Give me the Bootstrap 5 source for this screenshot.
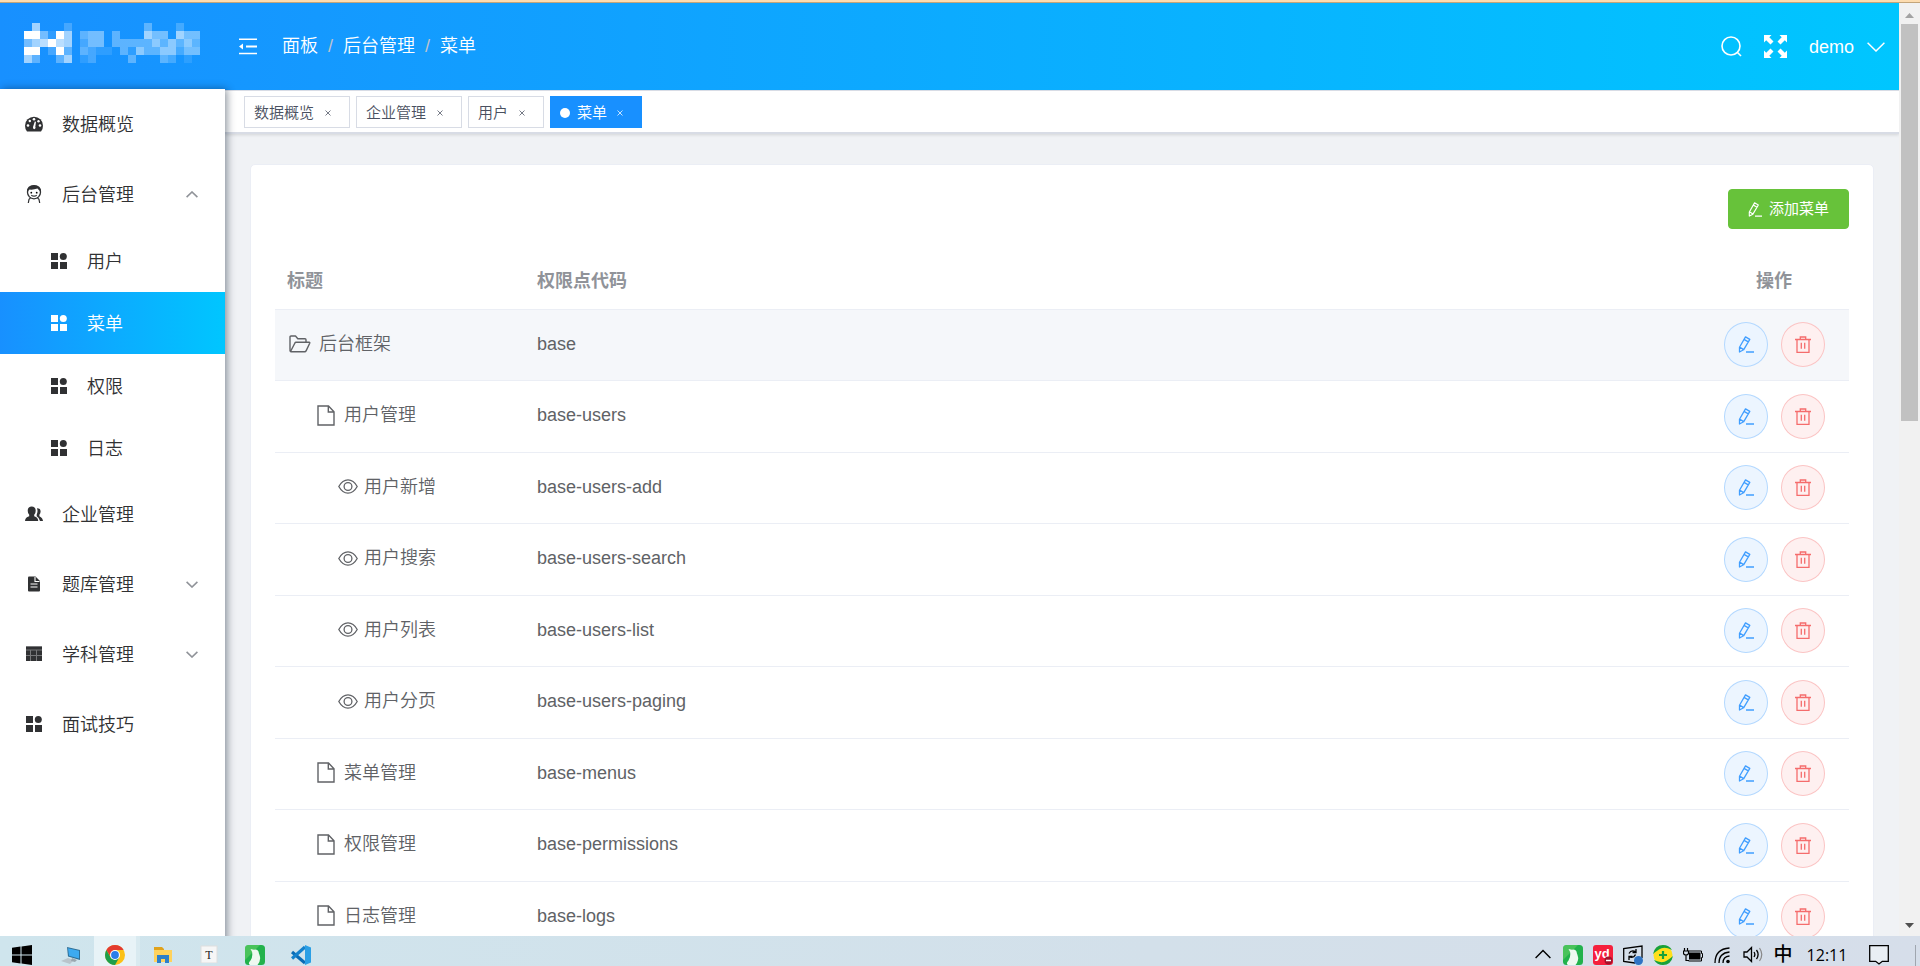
<!DOCTYPE html>
<html lang="zh-CN">
<head>
<meta charset="utf-8">
<meta name="viewport" content="width=device-width, initial-scale=1">
<title>菜单</title>
<link href="https://cdn.jsdelivr.net/npm/bootstrap@5.3.0/dist/css/bootstrap.min.css" rel="stylesheet">
<style>
  :root { --blue: #1890ff; --cyan: #00c6ff; --line: #ebeef5; }
  body { font-family: "Liberation Sans", "Noto Sans CJK SC", sans-serif; font-size: 18px; line-height: 24px; font-weight: 350; color: #606266; background: #f0f2f5; }
  svg { display: block; flex: none; }
  .stroke { fill: none; stroke: currentColor; }
  .window-edge { height: 3px; flex: none; background: #fddcb0; border-bottom: 1px solid #c3a57a; }

  .topbar { height: 87px; flex: none; background: linear-gradient(90deg, var(--blue), var(--cyan)); color: #fff; padding: 0 14px 0 24px; }
  .topbar a, .topbar .btn { color: #fff; }
  .topbar .btn, .tag-close { border: 0; padding: 0; background: none; }
  .topbar .btn { font-size: 18px; line-height: 24px; }
  .topbar-tools { gap: 22px; }
  .user-menu { gap: 13px; }
  .brand-logo { width: 215px; margin-bottom: 8px; }
  .crumbs { --bs-breadcrumb-divider-color: #c0c4cc; --bs-breadcrumb-item-padding-x: 10px; margin-left: 25px; padding-bottom: 2px; }

  .sidebar { width: 225px; flex: none; background: #fff; box-shadow: 2px 0 8px rgba(0, 21, 41, .45); margin-top: -1px; z-index: 2; }
  .side-link { height: 70px; padding: 2px 27px 0 25px; gap: 19px; color: #303133; text-decoration: none; display: flex; align-items: center; }
  .side-link svg { margin-bottom: 2px; }
  .side-sub .side-link { height: 63px; padding-left: 50px; }
  .side-sub .side-link:nth-child(even) { height: 62px; }
  .side-link.active { background: linear-gradient(90deg, var(--blue), var(--cyan)); color: #fff; }
  .side-link .caret { color: #909399; margin-left: auto; }

  .tagbar { height: 44px; flex: none; background: #fff; border-top: 1px solid #d8dce5; border-bottom: 2px solid #d8dce5; box-shadow: 0 1px 3px rgba(0, 0, 0, .12); padding: 5px 19px 4px; gap: 6px; }
  .tag-item { height: 32px; border: 1px solid #d8dce5; color: #495060; font-size: 15px; padding: 1px 15px 0 9px; gap: 8px; background: #fff; }
  .tag-item a { color: inherit; text-decoration: none; }
  .tag-item.current { background: var(--blue); border-color: var(--blue); color: #fff; gap: 7px; }
  .tag-dot { width: 10px; height: 10px; border-radius: 50%; background: #fff; }
  .tag-close { color: inherit; opacity: .75; width: 12px; }

  .panel { margin: 30px 25px 0; padding: 25px; border: 1px solid var(--line); border-radius: 5px; background: #fff; padding: 24px; }
  .btn-add { height: 40px; width: 121px; font-size: 15px; padding: 0; background: #67c23a; border-color: #67c23a; color: #fff; gap: 7px; border-radius: 4px; }
  .menu-table { table-layout: fixed; width: 100%; margin: 24px 0 0; --bs-table-bg: transparent; --bs-table-color: #606266; }
  .menu-table > :not(caption) > * > * { padding: 0 12px; border-bottom: 1px solid var(--line); vertical-align: middle; color: inherit; }
  .menu-table > tbody > tr > td:not(:last-child) { padding-bottom: 2px; }
  .menu-table > thead > tr > th { height: 56px; color: #909399; font-weight: 700; }
  .menu-table tbody tr { height: 71px; }
  .menu-table tbody tr:nth-child(even) { height: 72px; }
  .menu-table tbody tr.hovered { background: #f5f7fa; }
  .col-name { width: 250px; }
  .col-ops { width: 150px; }
  .lv1, .lv2, .lv3 { display: flex; align-items: center; }
  .lv1 { padding-left: 2px; gap: 8px; }
  .lv2 { padding-left: 30px; gap: 9px; }
  .lv3 { padding-left: 51px; gap: 6px; }
  .row-actions { gap: 13px; }
  .btn-round { width: 44px; height: 45px; border-radius: 50%; padding: 0; display: flex; align-items: center; justify-content: center; }
  .btn-edit { background: #ecf5ff; border-color: #b3d8ff; color: #409eff; }
  .btn-del { background: #fef0f0; border-color: #fbc4c4; color: #f56c6c; }

  .scrollrail { width: 21px; flex: none; background: #f1f1f1; padding: 10px 2px 8px; }
  .scrollrail .thumb { height: 397px; margin-top: 6px; background: #c1c1c1; }

  .taskbar { height: 30px; flex: none; background: linear-gradient(90deg, #cfe5ed, #d3e0ea 60%, #d6deea); color: #000; z-index: 3; }
  .task-slot { width: 46px; height: 30px; padding: 9px 0 0; display: flex; justify-content: center; overflow: hidden; }
  .task-slot.start { width: 44px; }
  .task-slot.open { background: #e8f3f7; border-right: 4px solid #d9eaf0; }
  .tray { padding: 9px 4px 0 0; }
  .tray-slot { width: 30px; display: flex; justify-content: center; }
  .tray .vr { margin-left: 21px; }
  .clock { font: 16px/20px "Open Sans", sans-serif; width: 58px; text-align: center; }
  .ime { font-size: 19px; line-height: 20px; font-weight: 500; }
</style>
</head>
<body class="vh-100 d-flex flex-column overflow-hidden">
<svg width="0" height="0" class="position-absolute" aria-hidden="true">
  <symbol id="grid" viewBox="0 0 16 16"><path d="M0 0h7v7H0zM0 9h7v7H0zM9 9h7v7H9z"/><circle cx="12.300" cy="3.500" r="3.500"/></symbol>
  <symbol id="down" viewBox="0 0 12 7"><path class="stroke" stroke-width="1.600" d="M.6.8 6 6 11.400.8"/></symbol>
  <symbol id="folder" viewBox="0 0 22 18"><path class="stroke" stroke-width="1.400" stroke-linejoin="round" d="M1 14.500V2q0-1 1-1h4.500l2.300 2.700H16q1 0 1 1V7M1.500 16.500 5.800 8.200Q6.300 7.300 7 7.300h13.200q.9 0 .5.9l-3.500 7.400q-.5 1.100-1.500 1.100H2.200Q1 16.700 1 15z"/></symbol>
  <symbol id="doc" viewBox="0 0 18 21"><path class="stroke" stroke-width="1.400" d="M1 1h10.500L17 6.800V20H1zM11.300 1v6H17"/></symbol>
  <symbol id="eye" viewBox="0 0 20 15"><path class="stroke" stroke-width="1.300" d="M.8 7.500Q4.500.9 10 .9t9.200 6.600Q15.500 14.100 10 14.100T.8 7.500z"/><circle class="stroke" stroke-width="1.300" cx="10" cy="7.500" r="3.900"/></symbol>
  <symbol id="edit" viewBox="0 0 16 17"><path class="stroke" stroke-width="1.300" stroke-linejoin="round" d="M1.500 11.300 7.500.9l4.300 2.500-6.200 10.400L1.500 16zM6 3.400l4.300 2.500M1.600 11l4 2.600M8 16h8"/></symbol>
  <symbol id="trash" viewBox="0 0 16 17"><path class="stroke" stroke-width="1.300" d="M0 3.500h16M5.300 3.300V1h5.400v2.300M2 3.500v12.800h12V3.500M6.300 6.800v6M9.700 6.800v6"/></symbol>
  <symbol id="times" viewBox="0 0 6 6"><path class="stroke" stroke-width="1" d="M.5.5l5 5M5.500.5l-5 5"/></symbol>
  <symbol id="bird" viewBox="0 0 20 20"><rect width="20" height="20" rx="3.500" fill="#22b24c"/><path fill="#6fd36a" d="M0 15 15 0H3.500Q0 0 0 3.500z" opacity=".5"/><path fill="#eef9f0" d="M5.500 4 9 4.800Q12 3.500 13.500 6.500q.3 1.800 1 3.500 2 5-2 10H5q-2.500-1.500.5-4.500Q7.500 12.500 7.300 9 7.300 6.500 5.500 4z"/></symbol>
</svg>

<div class="window-edge"></div>
<div class="d-flex flex-grow-1 overflow-hidden">
  <div class="d-flex flex-column flex-grow-1 overflow-hidden">
    <header class="topbar d-flex align-items-center">
      <a href="#" class="brand-logo" aria-label="首页">
        <svg id="logo" width="176" height="40" viewBox="0 0 22 5" fill="#fff" shape-rendering="crispEdges"></svg>
      </a>
      <button class="btn" type="button" aria-label="折叠菜单"><svg width="18" height="17" viewBox="0 0 18 17"><path d="M0 .6h18V2H0zM7 7.600h11V9.400H7zM0 14.800h18v1.500H0zM0 8.500 4 5.500v6z" fill="currentColor"/></svg></button>
      <nav aria-label="breadcrumb">
        <ol class="breadcrumb crumbs mb-0">
          <li class="breadcrumb-item"><a href="#" class="text-decoration-none">面板</a></li>
          <li class="breadcrumb-item"><a href="#" class="text-decoration-none">后台管理</a></li>
          <li class="breadcrumb-item"><a href="#" class="text-decoration-none">菜单</a></li>
        </ol>
      </nav>
      <div class="topbar-tools ms-auto d-flex align-items-center">
        <button class="btn" type="button" aria-label="搜索"><svg width="21" height="21" viewBox="0 0 21 21"><circle class="stroke" stroke-width="1.600" cx="10" cy="10" r="9"/><path class="stroke" stroke-width="1.600" d="m16 16 4 4"/></svg></button>
        <button class="btn" type="button" aria-label="全屏"><svg width="23" height="23" viewBox="0 0 23 23" fill="currentColor"><g id="arr"><path d="M0 0h7.500L5.300 2.200 9.500 6.500 6.500 9.500 2.200 5.300 0 7.500z"/></g><use href="#arr" transform="rotate(90 11.500 11.500)"/><use href="#arr" transform="rotate(180 11.500 11.500)"/><use href="#arr" transform="rotate(270 11.500 11.500)"/></svg></button>
        <button class="btn user-menu d-flex align-items-center" type="button">demo<svg width="18" height="10" viewBox="0 0 18 10"><path class="stroke" stroke-width="1.500" d="M.6.8 9 9 17.400.8"/></svg></button>
      </div>
    </header>

    <div class="d-flex flex-grow-1">
      <aside class="sidebar">
        <nav>
          <a href="#" class="side-link"><svg width="18" height="18" viewBox="0 0 18 18"><path fill="currentColor" d="M2 16.500Q0 14 0 10.700a9 9 0 0 1 18 0q0 3.300-2 5.800z"/><g fill="#fff"><circle cx="9" cy="4.300" r="1.300"/><circle cx="4.800" cy="6" r="1.200"/><circle cx="3" cy="10.500" r="1.300"/><circle cx="13.500" cy="6.200" r="1.200"/><circle cx="15" cy="10.500" r="1.300"/><path d="m9.800 6.500 1.200.3-.7 5q1 1.500-.8 2.400-2-.2-1.500-2.200z"/></g></svg>数据概览</a>
          <a href="#" class="side-link"><svg width="18" height="18" viewBox="0 0 18 18"><circle class="stroke" stroke-width="1.300" cx="9" cy="7.300" r="6.500"/><path fill="currentColor" d="M2 6.500Q2 0 9 0t7 6.500Q13.500 5 12.500 3.600 8 5 4.500 4.500 3.500 5.600 2 6.500z"/><circle cx="6.300" cy="7.700" r=".9"/><circle cx="11.700" cy="7.700" r=".9"/><path class="stroke" stroke-width="1.200" d="M6.300 10.200q2.700 2 5.400 0M5.500 13l-1.500 1.300L3.300 18M12.500 13l1.500 1.300.7 3.700"/></svg>后台管理<svg class="caret" width="12" height="7" viewBox="0 0 12 7"><path class="stroke" stroke-width="1.600" d="M.6 6.200 6 1l5.400 5.200"/></svg></a>
          <div class="side-sub">
            <a href="#" class="side-link"><svg width="18" height="16" fill="currentColor"><use href="#grid"/></svg>用户</a>
            <a href="#" class="side-link active" aria-current="page"><svg width="18" height="16" fill="currentColor"><use href="#grid"/></svg>菜单</a>
            <a href="#" class="side-link"><svg width="18" height="16" fill="currentColor"><use href="#grid"/></svg>权限</a>
            <a href="#" class="side-link"><svg width="18" height="16" fill="currentColor"><use href="#grid"/></svg>日志</a>
          </div>
          <a href="#" class="side-link"><svg width="18" height="18" viewBox="0 0 18 18" fill="currentColor"><path d="M6.700 1.500q4 .1 4 4.300 0 2.500-1.500 4v1.500q4 1.300 4 4.700H0q0-3.400 4.200-4.700V9.800q-1.500-1.500-1.500-4 0-4.200 4-4.300zM12 3.200q3.600-.3 3.600 3.400 0 2-1.200 3.200v1.400Q17.800 13 18 16h-3q-.5-3-3.300-4.700V9.500q1.500-3 .3-6.300z"/></svg>企业管理</a>
          <a href="#" class="side-link"><svg width="18" height="18" viewBox="0 0 18 18"><path fill="currentColor" d="M4 1.500h6.500l4.500 4.500v9.500q0 1-1 1H4q-1 0-1-1v-13q0-1 1-1z"/><path stroke="#fff" stroke-width="1.100" fill="none" d="M10 2v4.500h4.500M5.500 9h7M5.500 12h7"/></svg>题库管理<svg class="caret" width="12" height="7"><use href="#down"/></svg></a>
          <a href="#" class="side-link"><svg width="18" height="18" viewBox="0 0 18 18"><path fill="#77787a" d="M1 1h16v15H1z"/><path fill="currentColor" d="M1 2h16v2.500H1zM1 5.500h4V10H1zM6 5.500h5V10H6zM12 5.500h5V10h-5zM1 11h4v5H1zM6 11h5v5H6zM12 11h5v5h-5z"/></svg>学科管理<svg class="caret" width="12" height="7"><use href="#down"/></svg></a>
          <a href="#" class="side-link"><svg width="18" height="16" fill="currentColor"><use href="#grid"/></svg>面试技巧</a>
        </nav>
      </aside>

      <div class="flex-grow-1 d-flex flex-column overflow-hidden">
        <div class="tagbar d-flex align-items-center">
          <div class="tag-item d-flex align-items-center"><a href="#">数据概览</a><button class="tag-close" type="button" aria-label="关闭"><svg class="mx-auto" width="6" height="6"><use href="#times"/></svg></button></div>
          <div class="tag-item d-flex align-items-center"><a href="#">企业管理</a><button class="tag-close" type="button" aria-label="关闭"><svg class="mx-auto" width="6" height="6"><use href="#times"/></svg></button></div>
          <div class="tag-item d-flex align-items-center"><a href="#">用户</a><button class="tag-close" type="button" aria-label="关闭"><svg class="mx-auto" width="6" height="6"><use href="#times"/></svg></button></div>
          <div class="tag-item current d-flex align-items-center"><span class="tag-dot"></span><a href="#">菜单</a><button class="tag-close" type="button" aria-label="关闭"><svg class="mx-auto" width="6" height="6"><use href="#times"/></svg></button></div>
        </div>

        <main class="panel">
          <div class="d-flex justify-content-end">
            <button class="btn btn-add d-flex align-items-center justify-content-center" type="button"><svg width="14" height="15"><use href="#edit"/></svg>添加菜单</button>
          </div>
          <table class="table menu-table">
            <thead><tr><th class="col-name">标题</th><th>权限点代码</th><th class="col-ops text-center">操作</th></tr></thead>
            <tbody id="rows"></tbody>
          </table>
        </main>
      </div>
    </div>
  </div>
  <div class="scrollrail d-flex flex-column">
    <svg class="mx-auto" width="9" height="5"><path d="M0 5 4.500 0 9 5z" fill="#a3a3a3"/></svg>
    <div class="thumb"></div>
    <svg class="mx-auto mt-auto" width="9" height="5"><path d="M0 0h9L4.500 5z" fill="#505050"/></svg>
  </div>
</div>

<footer class="taskbar d-flex">
  <div class="task-slot start me-1"><svg width="20" height="20" viewBox="0 0 20 20"><path d="M0 2.800 8.500 1.600V9.500H0zM9.500 1.400 20 0v9.500H9.500zM0 10.500h8.500v8L0 17.300zM9.500 10.500H20V20L9.500 18.600z"/></svg></div>
  <div class="task-slot"><svg width="20" height="20" viewBox="0 0 20 20"><path d="m6 2 13 3v10L7 11.500z" fill="#2f6f96"/><path d="m7 3.200 11 2.600v7.800L8 10.800z" fill="#3daaf0"/><path d="m0 16 7-3 6 2-4 4z" fill="#b9c4cb"/><path d="m11 13 5 2-2 2-4-1z" fill="#9aa7af"/></svg></div>
  <div class="task-slot open"><svg width="20" height="20" viewBox="0 0 20 20"><circle cx="10" cy="10" r="10" fill="#fbc116"/><path fill="#e33b2e" d="M1.340 5A10 10 0 0 1 18.660 5H10L6 12.500z"/><path fill="#1e9e4a" d="M1.340 5A10 10 0 0 0 10 20l4.300-7.500-8.600 0z"/><circle cx="10" cy="10" r="5" fill="#fff"/><circle cx="10" cy="10" r="3.900" fill="#2b7de9"/></svg></div>
  <div class="task-slot"><svg width="18" height="18" viewBox="0 0 18 18"><path fill="#e0a21b" d="M0 2h8l2 2v4H0z"/><path fill="#ffd25c" d="M0 5h18v12H0z"/><path fill="#2d7fc9" d="M3 10h12v8h-4v-4H7v4H3z"/></svg></div>
  <div class="task-slot"><svg width="18" height="18" viewBox="0 0 18 18"><rect x="1" y="1" width="16" height="17" fill="#f6f6f6" stroke="#dedede"/><text x="9" y="14" text-anchor="middle" font-family="Liberation Serif" font-size="12" fill="#222">T</text></svg></div>
  <div class="task-slot"><svg width="20" height="20"><use href="#bird"/></svg></div>
  <div class="task-slot"><svg width="20" height="20" viewBox="0 0 20 20"><path d="M1 7 14 18" stroke="#0a6cb5" stroke-width="3.200"/><path d="M1 13.500 14 2" stroke="#1481cc" stroke-width="3.200"/><path d="m14 0 6 2.500v15L14 20z" fill="#2a9fe5"/></svg></div>

  <div class="tray ms-auto d-flex align-items-start">
    <div class="tray-slot pt-1"><svg width="16" height="10" viewBox="0 0 16 10"><path d="M.6 9 8 1.500 15.400 9" fill="none" stroke="#000" stroke-width="1.400"/></svg></div>
    <div class="tray-slot"><svg width="20" height="20"><use href="#bird"/></svg></div>
    <div class="tray-slot"><svg width="20" height="20" viewBox="0 0 20 20"><rect width="20" height="20" rx="3" fill="#f5203d"/><text x="9" y="13" text-anchor="middle" font-family="Liberation Sans" font-weight="700" font-size="13" fill="#fff">yd</text><circle cx="15.500" cy="15.500" r="4" fill="#a4122b"/><path d="M13 15.500h5" stroke="#fff" stroke-width="1.500"/></svg></div>
    <div class="tray-slot"><svg width="20" height="20" viewBox="0 0 20 20"><path fill="none" stroke="#000" stroke-width="1.300" d="M12 18 .7 16.500V3.500L19 1v12M6 8.500q2-4 6.500-2M13 4v3.500H9.500M12.500 9.500q-2 4-6.500 2.500M6 15v-3.500h3.500"/><circle cx="15.500" cy="15.500" r="4.500" fill="#2f74c4"/></svg></div>
    <div class="tray-slot"><svg width="20" height="20" viewBox="0 0 20 20"><circle cx="10" cy="10" r="9.500" fill="#ffdf1c"/><path fill="#18a13b" d="M0 9Q2 0 10 0q6 0 9 5-8-4-13-.5Q2 7 0 9zM20 11q-2 9-10 9-6 0-9-5 8 4 13 .5 4-2.500 6-4.500z"/><path d="M10 6v8M6 10h8" stroke="#18a13b" stroke-width="2.200"/></svg></div>
    <div class="tray-slot"><svg width="20" height="18" viewBox="0 0 20 18"><path d="M6 7.500h11.500v7H6z"/><path fill="none" stroke="#000" stroke-width="1" d="M5.500 6h13v2.500h1v4h-1V16h-13"/><path fill="none" stroke="#000" stroke-width="1.200" d="M1.500 3v3M4.500 3v3M.5 6h5v2.500Q5 10 3 10T.5 8.500zM3 10v5.500h3"/></svg></div>
    <div class="tray-slot"><svg width="18" height="19" viewBox="0 0 18 19"><path fill="none" stroke="#000" stroke-width="1.300" d="M1 18Q1 4 15.500 3M5 18Q5 8 15.500 7M9 18q0-6.500 6.500-7"/><circle cx="14" cy="16.500" r="1.800"/></svg></div>
    <div class="tray-slot"><svg width="20" height="18" viewBox="0 0 20 18"><path fill="none" stroke="#000" stroke-width="1.300" d="M1 7h3l4.500-4.500v14L4 12H1zM11 7q1.700 2.500 0 5M13.500 5q3.200 4.500 0 9"/><path fill="none" stroke="#888" stroke-width="1.200" d="M16.500 3q4.500 6.500 0 13"/></svg></div>
    <div class="tray-slot ime">中</div>
    <div class="clock">12:11</div>
    <div class="tray-slot ms-2"><svg width="20" height="20" viewBox="0 0 20 20"><path fill="#e9eef4" stroke="#000" stroke-width="1.300" d="M.7.700h18.600v15.600h-6L10 19l-3.300-2.700h-6z"/></svg></div>
    <div class="vr"></div>
  </div>
</footer>

<script>
  // Pixel-mosaic logo: each digit is the opacity of one cell in tenths (9 = solid)
  const mosaic = [
    '0600020000000003000200',
    '9941960344030006440644',
    '4679760244033333535353',
    '9902930321103153355244',
    '6300360120000300032010'
  ];
  document.getElementById('logo').innerHTML = mosaic.map((row, y) =>
    [...row].map((v, x) => v === '0' ? '' : `<rect x="${x}" y="${y}" width="1" height="1" opacity="${v === '9' ? 1 : v / 10}"/>`).join('')).join('');

  const sizes = { folder: [22, 18], doc: [18, 21], eye: [20, 15] };
  const menus = [
    [1, 'folder', '后台框架', 'base'],
    [2, 'doc', '用户管理', 'base-users'],
    [3, 'eye', '用户新增', 'base-users-add'],
    [3, 'eye', '用户搜索', 'base-users-search'],
    [3, 'eye', '用户列表', 'base-users-list'],
    [3, 'eye', '用户分页', 'base-users-paging'],
    [2, 'doc', '菜单管理', 'base-menus'],
    [2, 'doc', '权限管理', 'base-permissions'],
    [2, 'doc', '日志管理', 'base-logs']
  ];
  document.getElementById('rows').innerHTML = menus.map(([level, icon, title, code], i) => `
    <tr${i ? '' : ' class="hovered"'}>
      <td><div class="lv${level}"><svg width="${sizes[icon][0]}" height="${sizes[icon][1]}"><use href="#${icon}"/></svg><span>${title}</span></div></td>
      <td>${code}</td>
      <td><div class="row-actions d-flex justify-content-center">
        <button class="btn btn-round btn-edit" type="button" aria-label="编辑"><svg width="16" height="17"><use href="#edit"/></svg></button>
        <button class="btn btn-round btn-del" type="button" aria-label="删除"><svg width="16" height="17"><use href="#trash"/></svg></button>
      </div></td>
    </tr>`).join('');
</script>
<script src="https://cdn.jsdelivr.net/npm/bootstrap@5.3.0/dist/js/bootstrap.bundle.min.js"></script>
</body>
</html>
